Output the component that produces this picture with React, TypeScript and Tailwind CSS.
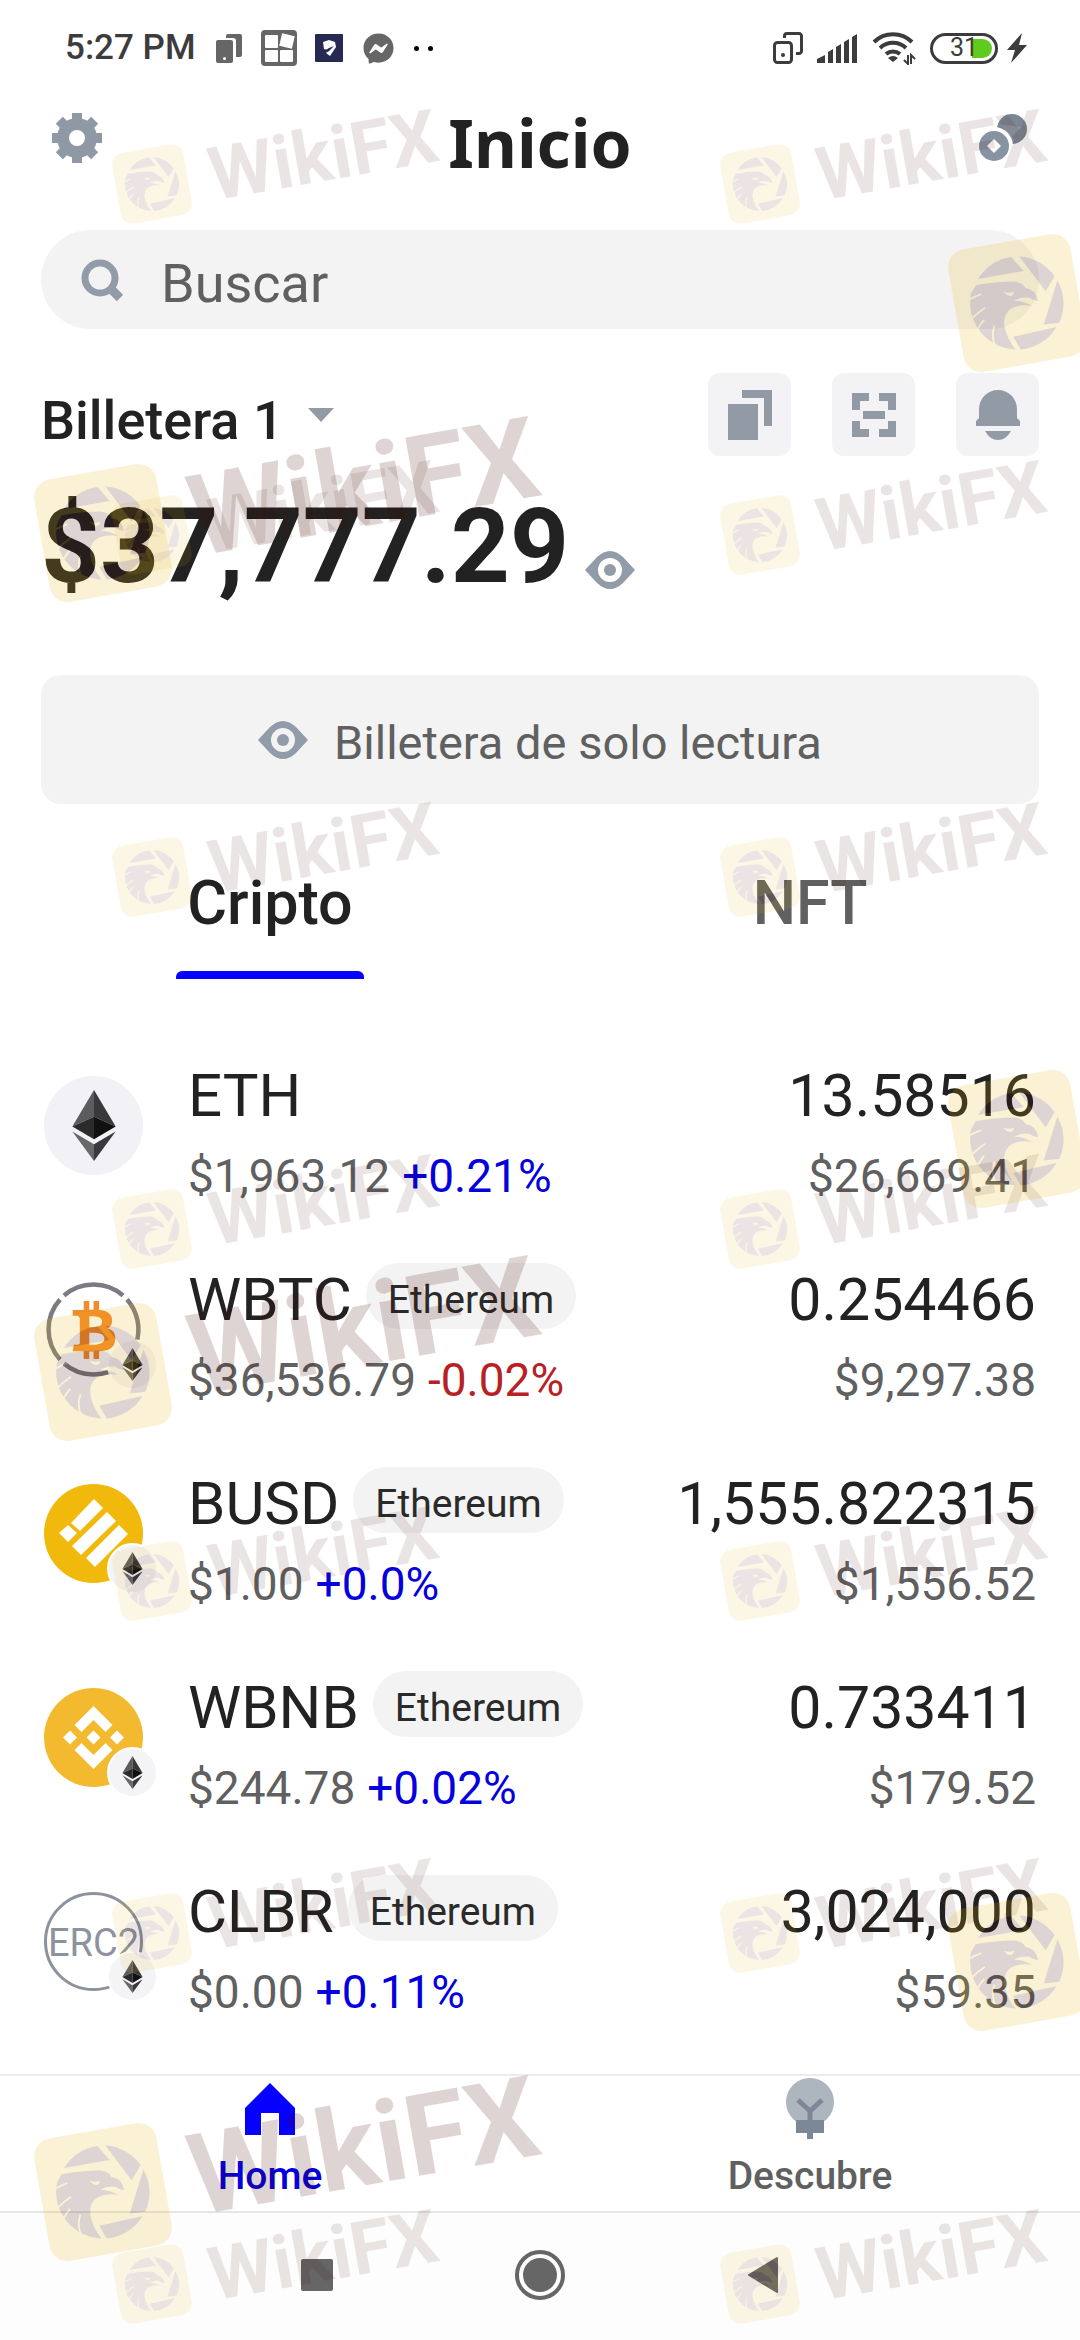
import React, { useState } from 'react';
import { FaBtc, FaFacebookMessenger } from 'react-icons/fa';

interface Asset {
  symbol: string;
  network?: string;
  price: string;
  change: string;
  amount: string;
  value: string;
  icon: React.ReactNode;
}

const EthMark = ({ className }: { className: string }) => (
  <svg viewBox="0 0 44 72" className={className}>
    <path d="M22 0 0 37l22-10z" fill="#5c5c5e" />
    <path d="M22 0v27l22 10z" fill="#39393b" />
    <path d="M0 37 22 27v23z" fill="#2b2b2c" />
    <path d="M44 37 22 27v23z" fill="#111112" />
    <path d="m0 42 22 13v17z" fill="#68686a" />
    <path d="M44 42 22 55v17z" fill="#39393b" />
  </svg>
);

const EthCoin = () => (
  <div className="flex size-[99px] items-center justify-center rounded-full bg-[#f2f2f6]">
    <EthMark className="h-[71px] w-[44px]" />
  </div>
);

const WbtcCoin = () => (
  <div className="relative flex size-[99px] items-center justify-center">
    <svg viewBox="0 0 99 99" className="absolute inset-0 size-full" fill="none" stroke="#7b7b83" strokeWidth="4.500">
      <path d="M20 15.500A45 45 0 0 1 79 15.500" />
      <path d="M83 19.500A45 45 0 0 1 92 64" />
      <path d="M79 83.500A45 45 0 0 1 20 83.500" />
      <path d="M16 79.500A45 45 0 0 1 16 19.500" />
    </svg>
    <FaBtc className="h-[58px] w-[44px] text-[#f28c2a]" />
  </div>
);

const BusdCoin = () => (
  <svg viewBox="0 0 99 99" className="size-[99px]">
    <circle cx="49.500" cy="49.500" r="49.500" fill="#f0b90b" />
    <g fill="#fff">
      <path d="m50 15 9 9-23 23-9-8z" />
      <path d="m63 28 9 9-35 34-9-9z" />
      <path d="m75 41 9 9-33 33-9-9z" />
      <path d="m24 41 9 8-9 9-9-9z" />
    </g>
  </svg>
);

const WbnbCoin = () => (
  <svg viewBox="0 0 99 99" className="size-[99px]">
    <circle cx="49.500" cy="49.500" r="49.500" fill="#f3ba2f" />
    <g fill="#fff">
      <path d="M37.500 44 49.500 32l12 12 7-7-19-19-19 19z" />
      <path d="M37.500 55 49.500 67l12-12 7 7-19 19-19-19z" />
      <path d="m49.500 42.500 7 7-7 7-7-7z" />
      <path d="m26 42.500 7 7-7 7-7-7z" />
      <path d="m73 42.500 7 7-7 7-7-7z" />
    </g>
  </svg>
);

const Erc20Coin = () => (
  <div className="flex size-[99px] items-center justify-center overflow-hidden rounded-full border-3 border-[#8d939e] pt-1 text-[38px] text-[#8d939e]">
    ERC2
  </div>
);

const assets: Asset[] = [
  { symbol: 'ETH', price: '$1,963.12', change: '+0.21%', amount: '13.58516', value: '$26,669.41', icon: <EthCoin /> },
  { symbol: 'WBTC', network: 'Ethereum', price: '$36,536.79', change: '-0.02%', amount: '0.254466', value: '$9,297.38', icon: <WbtcCoin /> },
  { symbol: 'BUSD', network: 'Ethereum', price: '$1.00', change: '+0.0%', amount: '1,555.822315', value: '$1,556.52', icon: <BusdCoin /> },
  { symbol: 'WBNB', network: 'Ethereum', price: '$244.78', change: '+0.02%', amount: '0.733411', value: '$179.52', icon: <WbnbCoin /> },
  { symbol: 'CLBR', network: 'Ethereum', price: '$0.00', change: '+0.11%', amount: '3,024,000', value: '$59.35', icon: <Erc20Coin /> },
];

const StatusBar = () => (
  <div className="flex h-24 items-center justify-between pr-[53px] pl-[65px] text-[#3c3c3c]">
    <div className="flex items-center">
      <span className="text-[35px] font-medium">5:27 PM</span>
      <svg viewBox="0 0 26 29" className="ml-5 h-[29px] w-[26px]" fill="#666">
        <path d="M12 0h12a2 2 0 0 1 2 2v19a2 2 0 0 1-2 2h-4V7a3 3 0 0 0-3-3h-7V2a2 2 0 0 1 2-2z" />
        <path fillRule="evenodd" d="M2 6h13a2 2 0 0 1 2 2v19a2 2 0 0 1-2 2H2a2 2 0 0 1-2-2V8a2 2 0 0 1 2-2zm6.500 17a1.500 1.500 0 1 0 0 3 1.500 1.500 0 0 0 0-3z" />
      </svg>
      <svg viewBox="0 0 36 36" className="ml-[19px] size-9">
        <rect width="36" height="36" rx="4" fill="#666" />
        <g fill="#fff">
          <rect x="4" y="5" width="13" height="13" rx="1" />
          <rect x="4" y="20" width="13" height="12" rx="1" />
          <rect x="19" y="20" width="13" height="12" rx="1" />
          <rect x="19.500" y="4.500" width="13" height="13" transform="rotate(13 26 11)" />
        </g>
      </svg>
      <svg viewBox="0 0 28 28" className="ml-[18px] size-7">
        <rect width="28" height="28" rx="1" fill="#262a52" />
        <path d="M8 8l6-2 6 2 1 5-2 3-4 6-4-3 2-3-4-1z" fill="#fff" />
        <path d="m9 17 5-3 5-2-5 5-3 2 1-2z" fill="#262a52" />
      </svg>
      <FaFacebookMessenger className="ml-5 size-[31px] text-[#666]" />
      <span className="ml-5 flex gap-[9px]">
        <i className="size-[5px] rounded-full bg-black" />
        <i className="size-[5px] rounded-full bg-black" />
      </span>
    </div>
    <div className="flex items-center">
      <svg viewBox="0 0 30 32" className="h-8 w-[30px]" fill="none" stroke="#3c3c3c" strokeWidth="3">
        <rect x="1.500" y="10.500" width="17" height="20" rx="3" />
        <path d="M11.500 6V4a2.500 2.500 0 0 1 2.500-2.500h12a2.500 2.500 0 0 1 2.500 2.500v15a2.500 2.500 0 0 1-2.500 2.500h-3" />
        <circle cx="10" cy="23" r="2" fill="#3c3c3c" stroke="none" />
      </svg>
      <svg viewBox="0 0 40 29" className="ml-[14px] h-[29px] w-10" fill="#3c3c3c">
        <path d="M0 29v-4l8-4v8zM11 29V18l5-3v14zM19 29V13l5-3v19zM27 29V8l5-3v24zM35 29V3l5-3v29z" />
      </svg>
      <svg viewBox="0 0 44 34" className="ml-[15px] h-[34px] w-11">
        <g fill="none" stroke="#3c3c3c" strokeWidth="4">
          <path d="M2 11a27 27 0 0 1 38 0" />
          <path d="M8 17a19 19 0 0 1 26 0" />
          <path d="M14 23a11 11 0 0 1 14 0" />
        </g>
        <path d="M16 27q5-4 10 0l-5 4z" fill="#3c3c3c" />
        <path d="M36 24v9l-4-4M39 33v-9l4 4" fill="none" stroke="#3c3c3c" strokeWidth="2" />
      </svg>
      <div className="relative ml-[14px] flex h-[31px] w-[68px] items-center justify-center rounded-full border-[3px] border-[#3c3c3c]">
        <i className="absolute right-[3px] h-[19px] w-[20px] rounded-r-full bg-[#5fcb1f]" />
        <span className="relative text-[25px] leading-6">31</span>
      </div>
      <svg viewBox="0 0 20 30" className="ml-[9px] h-[30px] w-5" fill="#3c3c3c">
        <path d="M15 0 0 17h8L4 30l16-18h-8z" />
      </svg>
    </div>
  </div>
);

const GearIcon = () => (
  <svg viewBox="0 0 50 50" className="size-[50px]" fill="#8f99a6">
    <path fillRule="evenodd" d="M25 5a20 20 0 1 0 0 40 20 20 0 0 0 0-40zm0 12a8 8 0 1 1 0 16 8 8 0 0 1 0-16z" />
    <path d="M20 0h10v8H20zM20 42h10v8H20zM0 20h8v10H0zM42 20h8v10h-8z" />
    <g transform="rotate(45 25 25)">
      <path d="M20 0h10v8H20zM20 42h10v8H20zM0 20h8v10H0zM42 20h8v10h-8z" />
    </g>
  </svg>
);

const EyeIcon = () => (
  <svg viewBox="0 0 50 38" className="h-[38px] w-[50px] shrink-0" fill="#929ba8">
    <path fillRule="evenodd" d="M0 19 12 6Q25-6 38 6l12 13-12 13Q25 44 12 32zM25 7a12 12 0 1 0 0 24 12 12 0 0 0 0-24z" />
    <circle cx="25" cy="19" r="6" />
  </svg>
);

const Header = () => (
  <header className="flex h-[84px] items-center justify-between px-[52px]">
    <button type="button" aria-label="Ajustes">
      <GearIcon />
    </button>
    <h1 className="pt-2 font-['Noto_Sans',sans-serif] text-[66px] leading-[84px] font-bold text-[#222]">Inicio</h1>
    <button type="button" aria-label="Criptomonedas">
      <svg viewBox="0 0 50 50" className="size-[50px]">
        <circle cx="34" cy="16" r="15" fill="#7c8796" />
        <path d="m24 12 10 12 9-10" fill="#8f99a6" />
        <circle cx="16" cy="33" r="19" fill="#fff" />
        <circle cx="16" cy="33" r="15" fill="#8793a1" />
        <path d="m16 26 7 7-7 7-7-7z" fill="#fff" />
      </svg>
    </button>
  </header>
);

const actionClass = 'flex size-[83px] items-center justify-center rounded-[12px] bg-[#f3f3f5]';

const WalletActions = () => (
  <div className="flex gap-[41px]">
    <button type="button" aria-label="Copiar" className={actionClass}>
      <svg viewBox="0 0 44 50" className="h-[50px] w-11" fill="#929ba5">
        <path d="M0 14h30v36H0zM14 0h30v36h-8V8H14z" />
      </svg>
    </button>
    <button type="button" aria-label="Escanear" className={actionClass}>
      <svg viewBox="0 0 44 44" className="size-11" fill="#929ba5">
        <path d="M0 0h17v8H8v9H0zM27 0h17v17h-8V8h-9zM0 28h8v8h9v8H0zM36 28h8v16H27v-8h9zM11 18h22v8H11z" />
      </svg>
    </button>
    <button type="button" aria-label="Notificaciones" className={actionClass}>
      <svg viewBox="0 0 44 50" className="h-[50px] w-11" fill="#929ba5">
        <path d="M3 28V19a19 19 0 0 1 38 0v9l3 3v5H0v-5zM9 41h26q-5 9-13 9T9 41z" />
      </svg>
    </button>
  </div>
);

const AssetRow = ({ asset }: { asset: Asset }) => (
  <li className="flex h-[204px] items-start">
    <div className="relative mt-[53px] ml-[3px] shrink-0">
      {asset.icon}
      {asset.network && (
        <span className="absolute -right-[15px] -bottom-[11px] flex size-[51px] items-center justify-center rounded-full border-2 border-white bg-[#f4f4f6]">
          <EthMark className="h-[33px] w-[21px]" />
        </span>
      )}
    </div>
    <div className="mt-[36px] ml-[45px] grow">
      <div className="flex items-center gap-[14px]">
        <span className="text-[60px] leading-[74px] text-[#222]">{asset.symbol}</span>
        {asset.network && (
          <span className="mb-2 h-[66px] rounded-full bg-[#f3f3f4] px-[22px] pt-2 text-[39px] leading-[58px] text-[#2a2a2a]">
            {asset.network}
          </span>
        )}
      </div>
      <div className="mt-[13px] flex gap-[12px] text-[46px] leading-[60px]">
        <span className="text-[#606060]">{asset.price}</span>
        <span className={asset.change.startsWith('-') ? 'text-[#b92025]' : 'text-[#0500dd]'}>{asset.change}</span>
      </div>
    </div>
    <div className="mt-[36px] pr-[3px] text-right">
      <div className="text-[59px] leading-[74px] text-[#222]">{asset.amount}</div>
      <div className="mt-[13px] text-[46px] leading-[60px] text-[#606060]">{asset.value}</div>
    </div>
  </li>
);

const EagleLogo = () => (
  <svg viewBox="-132 -132 264 264" className="size-full">
    <g transform="rotate(10)">
      <g fill="#400a00">
        <path d="M-83-51A98 98 0 0 1-12-98L14-68z" />
        <path d="M5-99A99 99 0 0 1 80-57L61-25z" />
        <path d="M86-48A98 98 0 0 1 90 42L57 46z" />
        <path d="M-8 72 84 51A98 98 0 0 1 8 99z" />
        <path d="M-98-20-88-38Q-45-46-5-46 14-43 18-32 40-30 45-4 38-4 26-11 10-14-6-5 16-4 32 6 8 2-12 11-30 24-27 48-22 76-3 99A100 100 0 0 1-98-20z" />
      </g>
      <path d="M-29-24Q-15-20-6-24-8-12-20-16z" fill="#e9b10e" />
      <g fill="none" stroke="#e9b10e" strokeWidth="4">
        <path d="M-100-8Q-90-14-76-19" />
        <path d="M-98 35Q-86 22-68 10" />
        <path d="M-84 56Q-78 46-70 36" />
        <path d="M-46 94Q-56 70-48 48" />
      </g>
    </g>
  </svg>
);

// Repeated brand marks laid over the whole screen
const smallMarks = [184, 535, 877, 1229, 1581, 1933, 2284].flatMap((y) => [152, 760].map((x) => ({ x, y })));
const largeMarks = [
  { x: 103, y: 533, named: true },
  { x: 1017, y: 303, named: false },
  { x: 103, y: 1372, named: true },
  { x: 1017, y: 1139, named: false },
  { x: 103, y: 2192, named: true },
  { x: 1017, y: 1962, named: false },
];

const Watermarks = () => (
  <div aria-hidden="true" className="pointer-events-none absolute inset-0 overflow-hidden">
    {smallMarks.map(({ x, y }) => (
      <div
        key={`s-${x}-${y}`}
        style={{ left: x - 36, top: y - 36 }}
        className="absolute flex h-[72px] origin-[36px_36px] -rotate-10 items-center gap-[22px] opacity-10"
      >
        <div className="size-[72px] rounded-[12px] bg-[#e9b10e]">
          <EagleLogo />
        </div>
        <span className="pt-1 text-[74px] leading-none font-bold text-[#400a00]">WikiFX</span>
      </div>
    ))}
    {largeMarks.map(({ x, y, named }) => (
      <div
        key={`l-${x}-${y}`}
        style={{ left: x - 62, top: y - 62 }}
        className="absolute flex h-[124px] origin-[62px_62px] -rotate-10 items-center gap-[26px] opacity-[0.17]"
      >
        <div className="size-[124px] rounded-[18px] bg-[#e9b10e]">
          <EagleLogo />
        </div>
        {named && <span className="text-[113px] leading-none font-bold text-[#400a00]">WikiFX</span>}
      </div>
    ))}
  </div>
);

const BottomNav = () => (
  <nav className="grid h-[137px] grid-cols-2 border-t-2 border-[#ebebeb] text-[39px] leading-[48px] font-medium">
    <a href="#home" className="flex flex-col items-center pt-[2px] text-[#0500dd]">
      <span className="flex h-[61px] items-center">
        <svg viewBox="0 0 50 52" className="h-[52px] w-[50px]" fill="#0500ff">
          <path d="M25 0 50 25v27H34V30H16v22H0V25z" />
        </svg>
      </span>
      <span className="mt-[13px]">Home</span>
    </a>
    <a href="#descubre" className="flex flex-col items-center pt-[2px] text-[#606060]">
      <svg viewBox="0 0 48 61" className="h-[61px] w-12">
        <circle cx="24" cy="24" r="24" fill="#adb5bf" />
        <path d="M12 22l12 11 12-11M24 32v12" fill="none" stroke="#7c8797" strokeWidth="5" />
        <path d="M10 42h28v13H27v6h-6v-6H10z" fill="#7c8797" />
      </svg>
      <span className="mt-[13px]">Descubre</span>
    </a>
  </nav>
);

const SystemNav = () => (
  <div className="flex h-[129px] items-center justify-center gap-[173px] border-t-2 border-[#e6e6e6] bg-[#fdfdfd] pb-[3px]">
    <button type="button" aria-label="Recientes" className="flex size-[50px] items-center justify-center">
      <i className="size-8 rounded-[2px] bg-[#666]" />
    </button>
    <button type="button" aria-label="Inicio del sistema" className="flex size-[50px] items-center justify-center rounded-full border-4 border-[#666]">
      <i className="size-[34px] rounded-full bg-[#666]" />
    </button>
    <button type="button" aria-label="Atrás" className="flex size-[50px] items-center justify-center">
      <svg viewBox="0 0 32 38" className="h-[38px] w-8" fill="#666" stroke="#666" strokeWidth="2" strokeLinejoin="round">
        <path d="M30 2v34L2 19z" />
      </svg>
    </button>
  </div>
);

export default function App() {
  const [tab, setTab] = useState('Cripto');
  const [search, setSearch] = useState('');

  return (
    <div className="relative flex min-h-screen flex-col bg-white font-['Roboto',sans-serif]">
      <StatusBar />
      <Header />
      <main className="px-[41px]">
        <label className="mt-[50px] flex h-[99px] items-center rounded-full bg-[#f3f3f3] pl-10">
          <svg viewBox="0 0 42 42" className="size-[42px] shrink-0" fill="none" stroke="#929ba8">
            <circle cx="19" cy="19" r="15" strokeWidth="7" />
            <path d="m29 29 10 10" strokeWidth="9" />
          </svg>
          <input
            type="text"
            aria-label="Buscar"
            placeholder="Buscar"
            value={search}
            onChange={(e) => setSearch(e.target.value)}
            className="ml-[38px] h-full min-w-0 grow bg-transparent pt-2 text-[54px] text-[#222] outline-none placeholder:text-[#606060]"
          />
        </label>

        <div className="mt-[44px] flex items-center justify-between">
          <button type="button" className="flex items-center gap-[24px] text-[#222]">
            <span className="pt-3 text-[54px] leading-[70px] font-medium">Billetera 1</span>
            <svg viewBox="0 0 26 14" className="h-[14px] w-[26px]" fill="#929ba5">
              <path d="M0 0h26L13 14z" />
            </svg>
          </button>
          <WalletActions />
        </div>

        <div className="mt-[31px] flex items-center gap-4">
          <span className="text-[103px] leading-[120px] font-bold text-[#222]">$37,777.29</span>
          <button type="button" aria-label="Ocultar saldo" className="pt-[46px]">
            <EyeIcon />
          </button>
        </div>

        <button type="button" className="mt-[68px] flex h-[129px] w-full items-center justify-center gap-[26px] rounded-[20px] bg-[#f3f3f3] text-[#606060]">
          <EyeIcon />
          <span className="pt-2 text-[47px]">Billetera de solo lectura</span>
        </button>

        <div role="tablist" className="-mx-[41px] mt-8 grid grid-cols-2">
          {['Cripto', 'NFT'].map((name) => (
            <button
              key={name}
              type="button"
              role="tab"
              aria-selected={tab === name}
              onClick={() => setTab(name)}
              className={`flex flex-col items-center text-[61px] leading-[135px] font-medium ${tab === name ? 'text-[#222]' : 'text-[#606060]'}`}
            >
              {name}
              <span className={`h-2 w-[188px] rounded-t-[6px] ${tab === name ? 'bg-[#0500ff]' : 'bg-transparent'}`} />
            </button>
          ))}
        </div>

        <ul className="mt-[44px]">
          {assets.map((asset) => (
            <AssetRow key={asset.symbol} asset={asset} />
          ))}
        </ul>
      </main>
      <div className="mt-auto">
        <BottomNav />
        <SystemNav />
      </div>
      <Watermarks />
    </div>
  );
}
